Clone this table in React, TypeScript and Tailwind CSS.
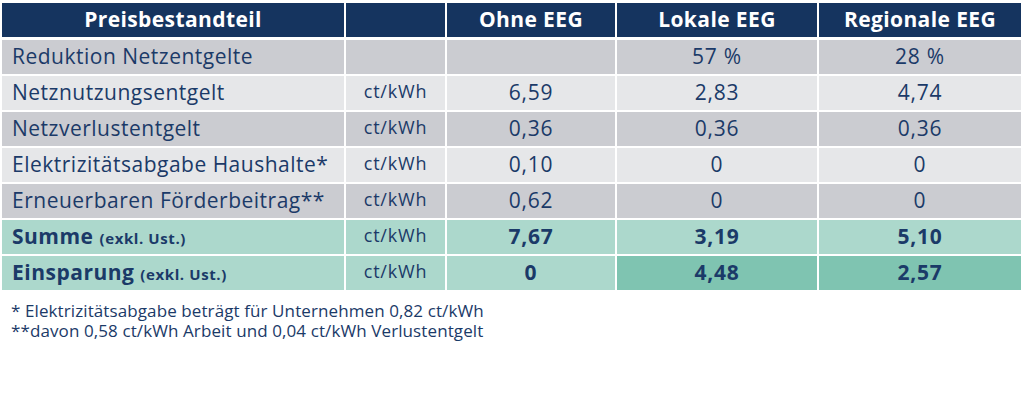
import React from "react";

type Row = {
  label: React.ReactNode;
  unit: string;
  values: string[];
  tone: "dark" | "light" | "green" | "save";
  bold?: boolean;
};

const rows: Row[] = [
  { label: "Reduktion Netzentgelte", unit: "", values: ["", "57 %", "28 %"], tone: "dark" },
  { label: "Netznutzungsentgelt", unit: "ct/kWh", values: ["6,59", "2,83", "4,74"], tone: "light" },
  { label: "Netzverlustentgelt", unit: "ct/kWh", values: ["0,36", "0,36", "0,36"], tone: "dark" },
  { label: "Elektrizitätsabgabe Haushalte*", unit: "ct/kWh", values: ["0,10", "0", "0"], tone: "light" },
  { label: "Erneuerbaren Förderbeitrag**", unit: "ct/kWh", values: ["0,62", "0", "0"], tone: "dark" },
  {
    label: (
      <>
        Summe <span className="text-[15px] tracking-[0.6px]">(exkl. Ust.)</span>
      </>
    ),
    unit: "ct/kWh",
    values: ["7,67", "3,19", "5,10"],
    tone: "green",
    bold: true,
  },
  {
    label: (
      <>
        Einsparung <span className="text-[15px] tracking-[0.6px]">(exkl. Ust.)</span>
      </>
    ),
    unit: "ct/kWh",
    values: ["0", "4,48", "2,57"],
    tone: "save",
    bold: true,
  },
];

const toneBg = {
  dark: "bg-[#cbccd1]",
  light: "bg-[#e6e7e9]",
  green: "bg-[#acd8cc]",
  save: "bg-[#acd8cc]",
};

const cols = "grid grid-cols-[342px_99px_168px_200px_202px] gap-x-[2px]";

export default function App() {
  return (
    <div
      className="h-[402px] w-[1024px] bg-white pl-[2px] pt-[3px] text-[#1b3a68]"
      style={{ fontFamily: '"Open Sans", "Liberation Sans", sans-serif' }}
    >
      {/* header */}
      <div className={`${cols} h-[34px] text-[21px] font-bold tracking-[0.4px] text-white`}>
        <div className="flex items-center justify-center bg-[#15345f]">Preisbestandteil</div>
        <div className="bg-[#15345f]" />
        <div className="flex items-center justify-center bg-[#15345f]">Ohne EEG</div>
        <div className="flex items-center justify-center bg-[#15345f]">Lokale EEG</div>
        <div className="flex items-center justify-center bg-[#15345f]">Regionale EEG</div>
      </div>

      {/* body */}
      <div className="mt-[3px] flex flex-col gap-y-[2px]">
        {rows.map((r, i) => (
          <div key={i} className={`${cols} h-[34px]`}>
            <div
              className={`flex items-center pl-[10px] text-[21px] tracking-[0.5px] ${toneBg[r.tone]} ${
                r.bold ? "font-bold" : ""
              }`}
            >
              <span>{r.label}</span>
            </div>
            <div
              className={`flex items-center justify-center pb-[3px] text-[18px] tracking-[0.8px] ${toneBg[r.tone]}`}
            >
              {r.unit}
            </div>
            {r.values.map((v, j) => (
              <div
                key={j}
                className={`flex items-center justify-center text-[21px] tracking-[0.8px] ${
                  r.tone === "save" && j > 0 ? "bg-[#7fc4b1]" : toneBg[r.tone]
                } ${r.bold ? "font-bold" : ""}`}
              >
                {v}
              </div>
            ))}
          </div>
        ))}
      </div>

      {/* footnotes */}
      <div className="mt-[11px] pl-[9px] text-[17px] leading-[20px] tracking-[0.1px]">
        <p>* Elektrizitätsabgabe beträgt für Unternehmen 0,82 ct/kWh</p>
        <p>**davon 0,58 ct/kWh Arbeit und 0,04 ct/kWh Verlustentgelt</p>
      </div>
    </div>
  );
}
